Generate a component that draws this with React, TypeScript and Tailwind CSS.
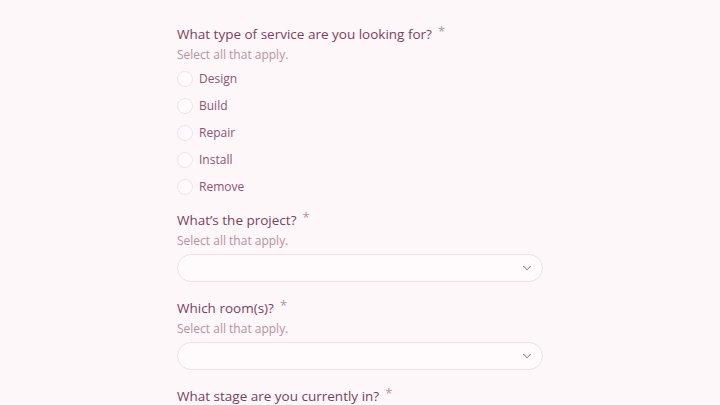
import { ChevronDown } from 'lucide-react'

const services = ['Design', 'Build', 'Repair', 'Install', 'Remove']

function Label({ text }: { text: string }) {
  return (
    <div className="flex items-start h-[21px]">
      <span className="text-[13.5px] leading-[21px] font-medium text-[#7b3f5e]">{text}</span>
      <span className="ml-[6px] text-[13px] leading-[14px] text-[#b8919f]">*</span>
    </div>
  )
}

function Hint() {
  return <div className="text-[12px] leading-[20px] text-[#b8929f]">Select all that apply.</div>
}

function Select() {
  return (
    <div className="h-[28px] rounded-full border border-[#f1e0e7] bg-[#fffbfd] flex items-center justify-end pr-[8px]">
      <ChevronDown size={14} strokeWidth={1.8} className="text-[#9c7d8c]" />
    </div>
  )
}

export default function App() {
  return (
    <div
      className="min-h-[405px] bg-[#fdf7f9]"
      style={{ fontFamily: '"Open Sans", "Noto Sans", sans-serif' }}
    >
      <div className="w-[366px] mx-auto pt-[24px] flex flex-col">
        <Label text="What type of service are you looking for?" />
        <Hint />
        <div className="flex flex-col gap-[11px] mt-[6px]">
          {services.map((s) => (
            <label key={s} className="flex items-center h-[16px]">
              <span className="w-[16px] h-[16px] rounded-full border border-[#f1e1e8] bg-[#fffbfd]" />
              <span className="ml-[6px] text-[12px] text-[#8a5472]">{s}</span>
            </label>
          ))}
        </div>

        <div className="mt-[15px]">
          <Label text="What’s the project?" />
        </div>
        <Hint />
        <div className="mt-[3px]">
          <Select />
        </div>

        <div className="mt-[16px]">
          <Label text="Which room(s)?" />
        </div>
        <Hint />
        <div className="mt-[3px]">
          <Select />
        </div>

        <div className="mt-[16px]">
          <Label text="What stage are you currently in?" />
        </div>
      </div>
    </div>
  )
}
